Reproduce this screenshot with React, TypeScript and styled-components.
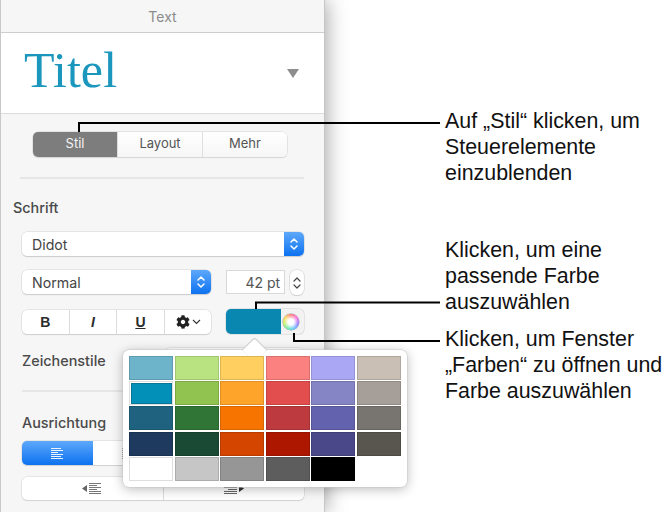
import React from "react";
import styled, { createGlobalStyle } from "styled-components";
import { FaCog } from "react-icons/fa";

const Global = createGlobalStyle`
  html, body { margin: 0; padding: 0; background: #fff; }
  body { font-family: "Inter", "Liberation Sans", sans-serif; }
`;

const Page = styled.div`
  position: relative;
  width: 668px;
  height: 512px;
  overflow: hidden;
  display: flex;
  background: #fff;
`;

const Panel = styled.div`
  box-sizing: border-box;
  width: 325px;
  height: 512px;
  flex: none;
  background: #f6f6f6;
  border-left: 1px solid #c9c9c9;
  border-right: 1px solid #c6c6c6;
  box-shadow: 1px 0 20px rgba(0, 0, 0, 0.38);
`;

const Header = styled.div`
  height: 32px;
  display: flex;
  align-items: center;
  justify-content: center;
  font-size: 14px;
  color: #8b8b8b;
  border-bottom: 1px solid #cdcdcd;
`;

const TitleBox = styled.div`
  height: 81px;
  box-sizing: border-box;
  background: #fff;
  border-bottom: 1px solid #dcdcdc;
  display: flex;
  align-items: center;
  justify-content: space-between;
  padding: 0 25px 0 23px;
`;

const TitleText = styled.span`
  font-family: "Liberation Serif", serif;
  font-size: 50px;
  line-height: 60px;
  margin-top: -7px;
  color: #1b96bd;
  letter-spacing: 0.1px;
`;

const Caret = styled.div`
  width: 0;
  height: 0;
  border-left: 6.5px solid transparent;
  border-right: 6.5px solid transparent;
  border-top: 9px solid #8d8d8d;
`;

const Body = styled.div`
  padding: 18px 20px 0 19px;
  display: flex;
  flex-direction: column;
`;

const Segments = styled.div`
  align-self: flex-start;
  display: flex;
  width: 254px;
  height: 25px;
  margin-left: 13px;
  box-sizing: border-box;
  border-radius: 5px;
  overflow: hidden;
  background: #fff;
  box-shadow: 0 0 0 0.5px #d2d2d2, 0 1px 1px rgba(0, 0, 0, 0.12);
`;

const Segment = styled.div<{ $on?: boolean }>`
  flex: 1;
  display: flex;
  align-items: center;
  justify-content: center;
  font-size: 13px;
  line-height: 23px;
  padding-bottom: 2px;
  color: ${(p) => (p.$on ? "#f4f4f4" : "#555")};
  background: ${(p) => (p.$on ? "#7d7d7d" : "linear-gradient(#fff, #f6f6f6)")};
  border-left: ${(p) => (p.$on ? "none" : "1px solid #dedede")};
`;

const Rule = styled.div<{ $top: number }>`
  height: 2px;
  margin-top: ${(p) => p.$top}px;
  background: #e6e6e6;
`;

const Label = styled.div<{ $top: number; $left?: number }>`
  margin-top: ${(p) => p.$top}px;
  margin-left: ${(p) => p.$left ?? 0}px;
  height: 16px;
  line-height: 16px;
  font-size: 14.4px;
  font-weight: 500;
  color: #4a4a4a;
`;

const Row = styled.div<{ $top: number }>`
  display: flex;
  margin-top: ${(p) => p.$top}px;
  gap: 15px;
`;

const Select = styled.div<{ $w: number }>`
  position: relative;
  width: ${(p) => p.$w}px;
  height: 24px;
  box-sizing: border-box;
  padding-left: 10px;
  display: flex;
  align-items: center;
  background: #fff;
  border-radius: 5px;
  overflow: hidden;
  font-size: 14.2px;
  color: #444;
  box-shadow: 0 0 0 0.5px #d4d4d4, 0 1px 1px rgba(0, 0, 0, 0.2);
`;

const SelectKnob = styled.div`
  margin-left: auto;
  width: 20px;
  height: 100%;
  display: flex;
  align-items: center;
  justify-content: center;
  background: linear-gradient(#5ea8fa, #0c72f0);
`;

const Indented = styled.div`
  margin-left: 2px;
  display: flex;
  flex-direction: column;
`;

const SizeBox = styled.div`
  box-sizing: border-box;
  width: 59px;
  height: 24px;
  padding-right: 4px;
  display: flex;
  align-items: center;
  justify-content: flex-end;
  background: #fff;
  border: 1px solid #d9d9d9;
  font-size: 14px;
  color: #555;
`;

const Stepper = styled.div`
  width: 14px;
  height: 25px;
  margin-left: -10px;
  display: flex;
  align-items: center;
  justify-content: center;
  background: #fff;
  border-radius: 6px;
  box-shadow: 0 0 0 0.5px #cfcfcf, 0 1px 1px rgba(0, 0, 0, 0.15);
`;

const ButtonGroup = styled.div`
  width: 190px;
  height: 24px;
  display: flex;
  background: #fff;
  border-radius: 5px;
  overflow: hidden;
  box-shadow: 0 0 0 0.5px #d4d4d4, 0 1px 1px rgba(0, 0, 0, 0.18);
`;

const StyleButton = styled.div`
  flex: 1;
  display: flex;
  align-items: center;
  justify-content: center;
  gap: 2px;
  color: #2b2b2b;
  font-size: 14px;
  font-family: "Liberation Sans", sans-serif;
  & + & {
    border-left: 1px solid #dcdcdc;
  }
`;

const Bold = styled.b`
  font-weight: 700;
`;

const Italic = styled.i`
  font-weight: 700;
`;

const Under = styled.u`
  font-weight: 700;
`;

const ColorWell = styled.div`
  width: 78px;
  height: 25px;
  display: flex;
  margin-top: -1px;
  border-radius: 5px;
  overflow: hidden;
  background: #f2f2f2;
  box-shadow: 0 0 0 0.5px #cfcfcf;
`;

const WellFill = styled.div`
  width: 55px;
  background: #0a87b1;
`;

const WellRing = styled.div`
  flex: 1;
  padding-right: 3px;
  display: flex;
  align-items: center;
  justify-content: center;
`;

const Wheel = styled.div`
  width: 16px;
  height: 16px;
  border-radius: 50%;
  background: radial-gradient(circle, #fff 0 25%, rgba(255, 255, 255, 0) 75%),
    conic-gradient(#ff5a5a, #ff4fd8, #7a5cff, #3fb4ff, #44e6a0, #b4ee3c, #ffd23c, #ff5a5a);
  box-shadow: 0 0 0 0.5px #999;
`;

const StyleSelect = styled.div`
  position: absolute;
  left: 165px;
  top: 348px;
  width: 139px;
  height: 24px;
  background: #fff;
  border-radius: 5px;
  box-shadow: 0 0 0 0.5px #d4d4d4;
`;

const AlignGroup = styled.div`
  display: flex;
  height: 24px;
  border-radius: 5px;
  overflow: hidden;
  background: #fff;
  box-shadow: 0 0 0 0.5px #d4d4d4, 0 1px 1px rgba(0, 0, 0, 0.15);
`;

const AlignCell = styled.div<{ $on?: boolean }>`
  width: 73px;
  display: flex;
  align-items: center;
  justify-content: center;
  background: ${(p) => (p.$on ? "linear-gradient(#5ea8fa, #0c72f0)" : "#fff")};
`;

const IndentGroup = styled.div`
  display: flex;
  height: 23px;
  border-radius: 5px;
  overflow: hidden;
  background: #fff;
  box-shadow: 0 0 0 0.5px #d4d4d4, 0 1px 1px rgba(0, 0, 0, 0.15);
`;

const IndentCell = styled.div`
  flex: 1;
  display: flex;
  align-items: center;
  justify-content: center;
  & + & {
    border-left: 1px solid #dcdcdc;
  }
`;

const Notes = styled.div`
  display: flex;
  flex-direction: column;
  padding: 108px 0 0 120px;
  font-family: "Liberation Sans", sans-serif;
  font-size: 21.4px;
  line-height: 26px;
  color: #111;
  white-space: nowrap;
`;

const Note = styled.div<{ $top: number }>`
  margin-top: ${(p) => p.$top}px;
`;

const Leaders = styled.svg`
  position: absolute;
  left: 0;
  top: 0;
  pointer-events: none;
`;

const Popover = styled.div`
  position: absolute;
  left: 123px;
  top: 350px;
  width: 284px;
  height: 137px;
  box-sizing: border-box;
  padding: 6px;
  background: #fff;
  border-radius: 6px;
  box-shadow: 0 0 0 0.5px #c8c8c8, 0 2px 12px rgba(0, 0, 0, 0.28);
`;

const PopArrow = styled.div`
  position: absolute;
  left: 123px;
  top: -8px;
  width: 17px;
  height: 17px;
  background: #fff;
  transform: rotate(45deg);
  box-shadow: -0.5px -0.5px 0 0.5px #cfcfcf;
  border-top-left-radius: 2px;
`;

const Swatches = styled.div`
  position: relative;
  display: grid;
  grid-template-columns: repeat(6, 44px);
  grid-auto-rows: 24px;
  column-gap: 1.5px;
  row-gap: 1.2px;
`;

const Swatch = styled.div<{ $c: string; $blank?: boolean }>`
  box-sizing: border-box;
  background: ${(p) => p.$c};
  border: 1px solid ${(p) => (p.$blank ? "transparent" : "rgba(0,0,0,0.13)")};
`;

const Picked = styled.div`
  position: absolute;
  left: 2px;
  top: 27px;
  width: 41px;
  height: 21px;
  background: #028fb8;
  border: 1px solid #0b7596;
  box-sizing: border-box;
`;

const MarginBox = styled.div<{ $top: number }>`
  margin-top: ${(p) => p.$top}px;
`;

const COLORS = [
  "#6db3c9", "#b9e381", "#ffd060", "#fb8080", "#aaa7f5", "#c9bfb5",
  "#ffffff", "#90c350", "#ffa42a", "#e24e4e", "#8584c4", "#a69e98",
  "#1f627f", "#307535", "#f77400", "#bd3a3e", "#6362af", "#787470",
  "#1e3a5f", "#1a4a33", "#d44600", "#ad1700", "#4a4888", "#59554f",
  "#ffffff", "#c6c6c6", "#969696", "#5d5d5d", "#000000", "transparent",
];

const UpDown = ({ color, sw = 1.5 }: { color: string; sw?: number }) => (
  <svg width="10" height="16" viewBox="0 0 10 16" fill="none" stroke={color} strokeWidth={sw} strokeLinecap="round" strokeLinejoin="round">
    <path d="M2 6 5 3 8 6" />
    <path d="M2 10 5 13 8 10" />
  </svg>
);

const Lines = ({ color, widths }: { color: string; widths: number[] }) => (
  <svg width="14" height="11" viewBox="0 0 14 11" stroke={color} strokeWidth="1">
    {widths.map((w, i) => (
      <line key={i} x1={1} x2={1 + w} y1={0.5 + i * 2} y2={0.5 + i * 2} />
    ))}
  </svg>
);

function AlignRow() {
  return (
    <MarginBox $top={10}>
      <AlignGroup>
        <AlignCell $on><Lines color="#eaf3ff" widths={[10, 12, 7, 12, 10, 12]} /></AlignCell>
        <AlignCell><Lines color="#666" widths={[10, 12, 7, 12, 10, 12]} /></AlignCell>
        <AlignCell />
        <AlignCell />
      </AlignGroup>
    </MarginBox>
  );
}

function IndentRow() {
  return (
    <MarginBox $top={12}>
      <IndentGroup>
        <IndentCell>
          <svg width="20" height="11" viewBox="0 0 20 11">
            <path d="M0 5.5 5 2V9Z" fill="#666" />
            <path d="M7 .5H19M7 2.5H15M7 4.5H19M7 6.5H15M7 8.5H19M7 10.5H19" stroke="#777" strokeWidth="1" />
          </svg>
        </IndentCell>
        <IndentCell>
          <svg width="20" height="11" viewBox="0 0 20 11">
            <path d="M0 .5H13M4 2.5H13M0 4.5H13M4 6.5H13M0 8.5H13M0 10.5H13" stroke="#666" strokeWidth="1" />
            <path d="M20 5.5 15 2V9Z" fill="#333" />
          </svg>
        </IndentCell>
      </IndentGroup>
    </MarginBox>
  );
}

export default function App() {
  return (
    <Page>
      <Global />
      <Panel>
        <Header>Text</Header>
        <TitleBox>
          <TitleText>Titel</TitleText>
          <Caret />
        </TitleBox>
        <Body>
          <Segments>
            <Segment $on>Stil</Segment>
            <Segment>Layout</Segment>
            <Segment>Mehr</Segment>
          </Segments>
          <Rule $top={20} />
          <Label $top={21} $left={-7}>Schrift</Label>
          <Indented>
            <Row $top={16}>
              <Select $w={282}>
                Didot
                <SelectKnob><UpDown color="#fff" /></SelectKnob>
              </Select>
            </Row>
            <Row $top={14}>
              <Select $w={190}>
                Normal
                <SelectKnob><UpDown color="#fff" /></SelectKnob>
              </Select>
              <SizeBox>42 pt</SizeBox>
              <Stepper><UpDown color="#444" sw={1.2} /></Stepper>
            </Row>
            <Row $top={15}>
              <ButtonGroup>
                <StyleButton><Bold>B</Bold></StyleButton>
                <StyleButton><Italic>I</Italic></StyleButton>
                <StyleButton><Under>U</Under></StyleButton>
                <StyleButton>
                  <FaCog size={14} color="#222" />
                  <svg width="9" height="6" viewBox="0 0 9 6" fill="none" stroke="#333" strokeWidth="1.1">
                    <path d="M1 1 4.5 4.5 8 1" />
                  </svg>
                </StyleButton>
              </ButtonGroup>
              <ColorWell>
                <WellFill />
                <WellRing><Wheel /></WellRing>
              </ColorWell>
            </Row>
            <Label $top={19}>Zeichenstile</Label>
            <Rule $top={21} />
            <Label $top={23}>Ausrichtung</Label>
            <AlignRow />
            <IndentRow />
          </Indented>
        </Body>
      </Panel>
      <Notes>
        <Note $top={0}>
          Auf „Stil“ klicken, um<br />Steuerelemente<br />einzublenden
        </Note>
        <Note $top={51}>
          Klicken, um eine<br />passende Farbe<br />auszuwählen
        </Note>
        <Note $top={11}>
          Klicken, um Fenster<br />„Farben“ zu öffnen und<br />Farbe auszuwählen
        </Note>
      </Notes>
      <StyleSelect />
      <Popover>
        <PopArrow />
        <Swatches>
          {COLORS.map((c, i) => (
            <Swatch key={i} $c={c} $blank={i === 29} />
          ))}
          <Picked />
        </Swatches>
      </Popover>
      <Leaders width="668" height="512" fill="none" stroke="#000" strokeWidth="2">
        <path d="M440 123H79V132" />
        <path d="M440 302.5H256V309" />
        <path d="M440 341H294V333" />
      </Leaders>
    </Page>
  );
}
